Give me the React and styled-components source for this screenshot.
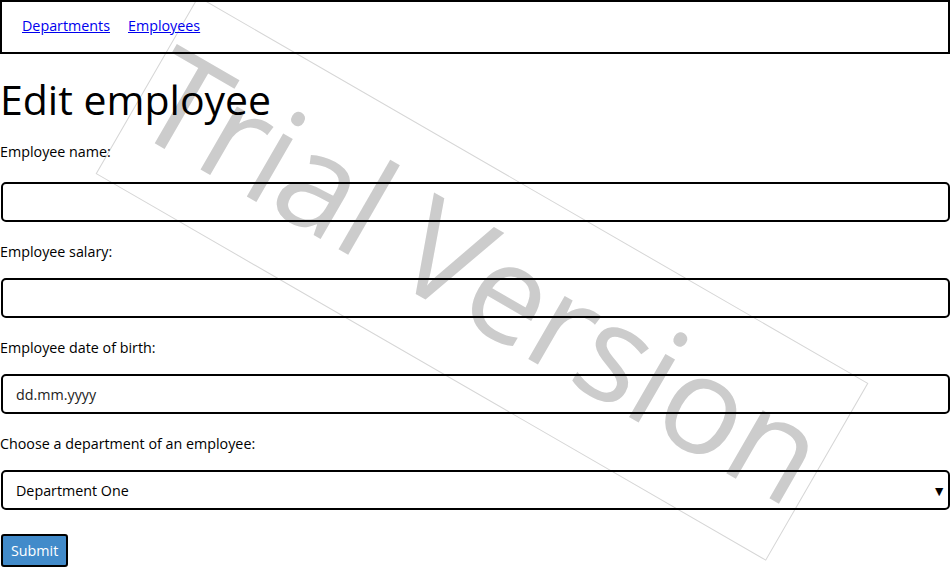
import React from 'react'
import styled, {createGlobalStyle} from 'styled-components'

const GlobalStyle = createGlobalStyle`
    body {
        margin: 0;
        font-family: "Open Sans", "Noto Sans", sans-serif;
        font-size: 14.3px;
        color: #000;
        background: #fff;
    }
`

const Page = styled.div`
    position: relative;
    width: 951px;
    height: 568px;
    overflow: hidden;
`

const Content = styled.div`
    position: relative;
    z-index: 1;
`

// Watermark laid over the page
const Watermark = styled.div`
    position: absolute;
    z-index: 0;
    left: 95px;
    top: 176px;
    width: 772px;
    height: 203px;
    border: 1px solid #d6d6d6;
    transform: rotate(30deg);
    display: flex;
    align-items: center;
    justify-content: center;
    pointer-events: none;
`

const WatermarkText = styled.span`
    font-family: "Open Sans", sans-serif;
    font-size: 136px;
    color: #cccccc;
    white-space: nowrap;
    letter-spacing: -2px;
    transform: translate(-2px, -6px);
`

const NavBar = styled.nav`
    box-sizing: border-box;
    display: flex;
    align-items: flex-start;
    gap: 18px;
    height: 54px;
    padding: 14px 20px 0;
    border: 2px solid #000;
    margin-right: 1px;
`

const NavLink = styled.a`
    color: #0000ee;
    text-decoration: underline;
    line-height: 20px;
    cursor: pointer;
`

const Title = styled.h1`
    margin: 20px 0 18px;
    font-size: 41px;
    font-weight: 400;
    line-height: 50px;
`

const Form = styled.form`
    display: flex;
    flex-direction: column;
`

const Field = styled.div`
    display: flex;
    flex-direction: column;
    gap: ${p => p.$gap || 16}px;
    margin-bottom: 20px;
`

const Label = styled.label`
    line-height: 20px;
`

const Input = styled.input`
    box-sizing: border-box;
    width: 949px;
    height: 40px;
    margin-left: 1px;
    padding: 0 13px;
    border: 2px solid #000;
    border-radius: 5px;
    background: transparent;
    font: inherit;
    color: #000;
    &::placeholder {
        color: #222;
    }
`

const SelectBox = styled.div`
    box-sizing: border-box;
    display: flex;
    align-items: center;
    justify-content: space-between;
    width: 949px;
    height: 40px;
    margin-left: 1px;
    padding: 0 2px 0 13px;
    border: 2px solid #000;
    border-radius: 5px;
`

const Arrow = styled.span`
    font-size: 14px;
`

const SubmitButton = styled.button`
    align-self: flex-start;
    margin: 4px 0 0 1px;
    height: 33px;
    padding: 0 8px;
    border: 2px solid #000;
    border-radius: 3px;
    background: #428bca;
    color: #fff;
    font: inherit;
`

const App = () => {
    return (
        <Page>
            <GlobalStyle/>

            <Watermark>
                <WatermarkText>Trial Version</WatermarkText>
            </Watermark>

            <Content>

                <NavBar>
                    <NavLink>Departments</NavLink>
                    <NavLink>Employees</NavLink>
                </NavBar>

                <Title>Edit employee</Title>

                <Form>

                    <Field $gap={20}>
                        <Label>Employee name:</Label>
                        <Input type="text"/>
                    </Field>

                    <Field>
                        <Label>Employee salary:</Label>
                        <Input type="text"/>
                    </Field>

                    <Field>
                        <Label>Employee date of birth:</Label>
                        <Input type="text" placeholder="dd.mm.yyyy"/>
                    </Field>

                    <Field>
                        <Label>Choose a department of an employee:</Label>
                        <SelectBox>
                            <span>Department One</span>
                            <Arrow>▼</Arrow>
                        </SelectBox>
                    </Field>

                    <SubmitButton type="button">Submit</SubmitButton>

                </Form>

            </Content>
        </Page>
    )
}

export default App
